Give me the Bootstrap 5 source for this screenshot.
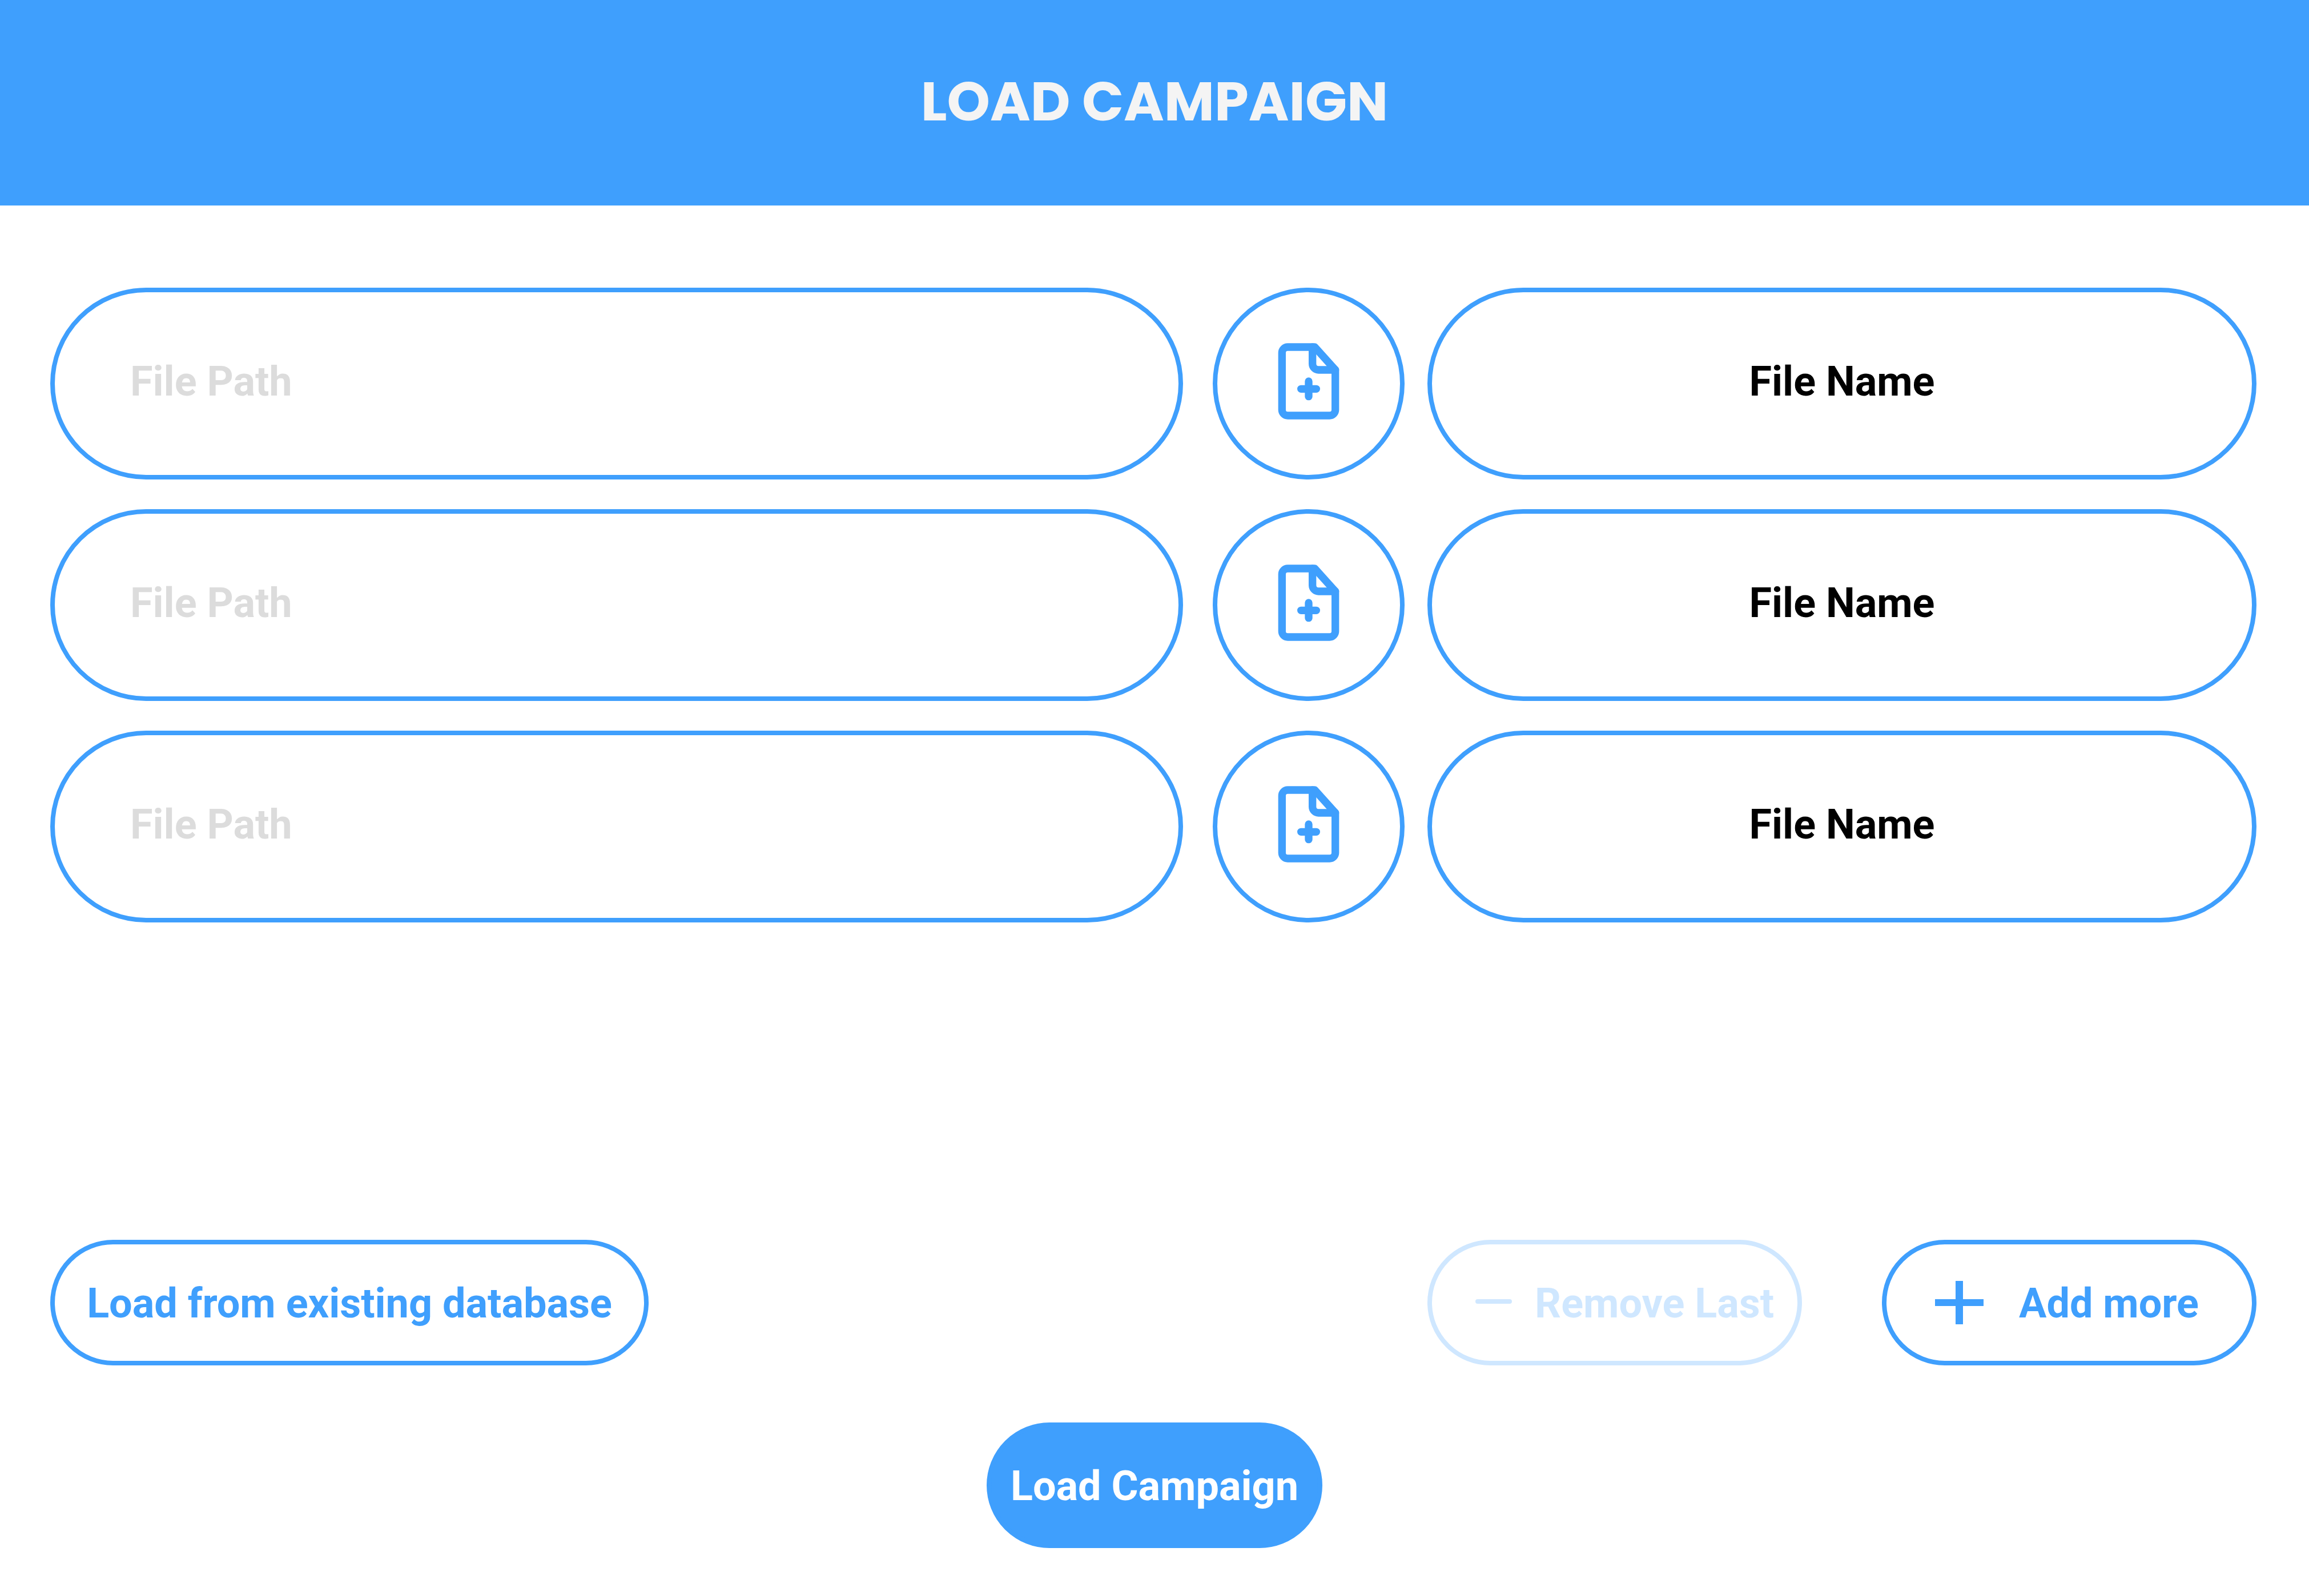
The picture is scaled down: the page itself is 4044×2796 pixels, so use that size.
<!DOCTYPE html>
<html lang="en">
<head>
<meta charset="utf-8">
<meta name="viewport" content="width=device-width, initial-scale=1">
<title>Load Campaign</title>
<link href="https://cdn.jsdelivr.net/npm/bootstrap@5.3.0/dist/css/bootstrap.min.css" rel="stylesheet">
<style>
  :root { --brand: #3f9ffd; --brand-muted: #cfe7ff; }
  body { font-family: Roboto, "Liberation Sans", sans-serif; font-size: 72px; font-weight: 700; line-height: 84px; }
  .app-header { height: 360px; background: var(--brand); padding-bottom: 4px; }
  .app-title { font-family: Poppins, Inter, "Liberation Sans", sans-serif; font-size: 96px; line-height: 112px; font-weight: 700; color: #f4f4f4; }
  .app-main { padding: 144px 0 84px; }
  .file-list, .action-row { padding: 0 92px 0 88px; }
  .file-list { gap: 52px; }
  .path-col { flex: 1984 1 0; margin-right: 52px; }
  .name-col { flex: 1452 1 0; margin-left: 40px; }
  .pill-field { height: 336px; padding: 0 132px 8px; border: 8px solid var(--brand); font-size: 72px; line-height: 84px; font-weight: 700; color: #000; }
  .pill-field:focus { border-color: var(--brand); box-shadow: 0 0 0 8px var(--brand-muted); }
  .pill-field::placeholder { color: #dcdcdc; opacity: 1; }
  .pick-btn { width: 336px; height: 336px; padding: 0 0 8px; border: 8px solid var(--brand); color: var(--brand); background: #fff; }
  .pill-btn { height: 220px; padding: 4px 0 0; border: 8px solid var(--brand); font-size: 72px; line-height: 84px; font-weight: 700; color: var(--brand); background: #fff; }
  .pill-btn:hover, .pick-btn:hover { border-color: var(--brand); color: var(--brand); background: #f2f8ff; }
  .pill-btn:disabled { border-color: var(--brand-muted); color: var(--brand-muted); background: #fff; opacity: 1; }
  .database-btn { width: 1048px; }
  .step-btn { width: 656px; }
  .step-remove { padding-left: 76px; gap: 40px; }
  .step-add { padding-left: 84px; gap: 62px; }
  .step-group { gap: 140px; }
  .submit-row { margin-top: 100px; }
  .submit-btn, .submit-btn:hover { width: 588px; background: var(--brand); color: #fff; }
</style>
<script defer src="https://cdn.jsdelivr.net/npm/bootstrap@5.3.0/dist/js/bootstrap.bundle.min.js"></script>
</head>
<body class="bg-white d-flex flex-column min-vh-100">
<svg class="d-none" aria-hidden="true">
  <symbol id="file-plus" viewBox="0 0 24 24">
    <g fill="none" stroke="currentColor" stroke-width="2" stroke-linecap="round" stroke-linejoin="round">
      <path d="M13.6 3H6.5A1.5 1.5 0 0 0 5 4.5v15A1.5 1.5 0 0 0 6.5 21h11a1.5 1.5 0 0 0 1.5-1.5V9z"/>
      <path d="M13 3v4.4A1.6 1.6 0 0 0 14.6 9H19M12 12v4M10 14h4"/>
    </g>
  </symbol>
</svg>

<header class="app-header d-flex align-items-center justify-content-center">
  <h1 class="app-title m-0">LOAD CAMPAIGN</h1>
</header>

<main class="app-main d-flex flex-column flex-grow-1">
  <form class="d-flex flex-column flex-grow-1">
    <div class="file-list d-flex flex-column">
      <div class="d-flex align-items-center">
        <div class="path-col"><input type="text" class="form-control rounded-pill pill-field" placeholder="File Path" aria-label="File path 1"></div>
        <button type="button" class="btn rounded-circle pick-btn d-flex align-items-center justify-content-center flex-shrink-0" aria-label="Choose file 1"><svg width="160" height="160" aria-hidden="true"><use href="#file-plus"/></svg></button>
        <div class="name-col"><input type="text" class="form-control rounded-pill pill-field text-center" value="File Name" aria-label="File name 1"></div>
      </div>
      <div class="d-flex align-items-center">
        <div class="path-col"><input type="text" class="form-control rounded-pill pill-field" placeholder="File Path" aria-label="File path 2"></div>
        <button type="button" class="btn rounded-circle pick-btn d-flex align-items-center justify-content-center flex-shrink-0" aria-label="Choose file 2"><svg width="160" height="160" aria-hidden="true"><use href="#file-plus"/></svg></button>
        <div class="name-col"><input type="text" class="form-control rounded-pill pill-field text-center" value="File Name" aria-label="File name 2"></div>
      </div>
      <div class="d-flex align-items-center">
        <div class="path-col"><input type="text" class="form-control rounded-pill pill-field" placeholder="File Path" aria-label="File path 3"></div>
        <button type="button" class="btn rounded-circle pick-btn d-flex align-items-center justify-content-center flex-shrink-0" aria-label="Choose file 3"><svg width="160" height="160" aria-hidden="true"><use href="#file-plus"/></svg></button>
        <div class="name-col"><input type="text" class="form-control rounded-pill pill-field text-center" value="File Name" aria-label="File name 3"></div>
      </div>
    </div>

    <div class="action-row d-flex justify-content-between mt-auto">
      <button type="button" class="btn rounded-pill pill-btn database-btn">Load from existing database</button>
      <div class="step-group d-flex">
        <button type="button" class="btn rounded-pill pill-btn step-btn step-remove d-flex align-items-center text-nowrap" disabled>
          <svg class="flex-shrink-0" width="64" height="16" viewBox="0 0 64 16" aria-hidden="true"><rect width="64" height="8" rx="4" fill="currentColor"/></svg>
          Remove Last
        </button>
        <button type="button" class="btn rounded-pill pill-btn step-btn step-add d-flex align-items-center text-nowrap">
          <svg class="flex-shrink-0" width="86" height="80" viewBox="0 0 86 80" aria-hidden="true"><path d="M37 0h13v32h36v12H50v32H37V44H1V32h36z" fill="currentColor"/></svg>
          Add more
        </button>
      </div>
    </div>
    <div class="submit-row d-flex justify-content-center">
      <button type="submit" class="btn rounded-pill pill-btn submit-btn text-nowrap">Load Campaign</button>
    </div>
  </form>
</main>
</body>
</html>
